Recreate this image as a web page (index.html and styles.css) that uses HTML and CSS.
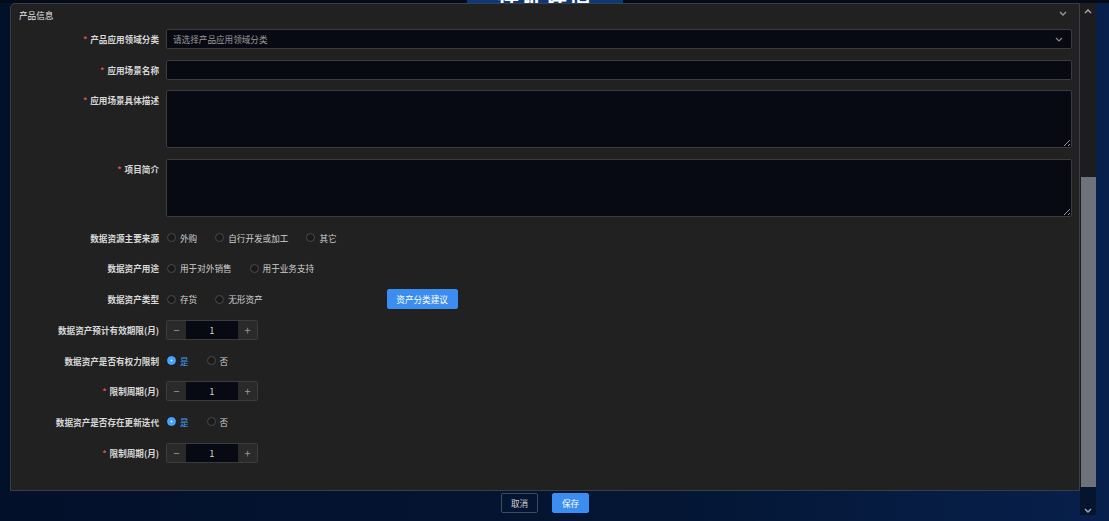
FILE: index.html
```html
<!DOCTYPE html>
<html lang="zh-CN">
<head>
  <meta charset="UTF-8">
  <title>产品信息</title>
  <link rel="stylesheet" href="styles.css">
</head>
<body>
<div class="page">
  <div class="title-bar">
    <div class="title"><span>存证详情</span></div>
  </div>

  <div class="body-row">
    <div class="content">
      <div class="panel">
        <div class="panel-head">
          <span>产品信息</span>
          <svg class="chev" width="8" height="5" viewBox="0 0 8 5"><path d="M1 1 L4 4 L7 1" fill="none" stroke="#9a9a9a" stroke-width="1.3"/></svg>
        </div>

        <div class="form">
          <div class="item">
            <label class="lbl"><i>*</i>产品应用领域分类</label>
            <div class="ctl select">
              <span class="ph">请选择产品应用领域分类</span>
              <svg width="8" height="5" viewBox="0 0 8 5"><path d="M1 1 L4 4 L7 1" fill="none" stroke="#8a8a8a" stroke-width="1.2"/></svg>
            </div>
          </div>

          <div class="item">
            <label class="lbl"><i>*</i>应用场景名称</label>
            <input class="ctl input" type="text">
          </div>

          <div class="item top">
            <label class="lbl"><i>*</i>应用场景具体描述</label>
            <textarea class="ctl area"></textarea>
          </div>

          <div class="item top">
            <label class="lbl"><i>*</i>项目简介</label>
            <textarea class="ctl area"></textarea>
          </div>

          <div class="item">
            <label class="lbl">数据资源主要来源</label>
            <div class="radios">
              <span class="radio"><b></b>外购</span>
              <span class="radio"><b></b>自行开发或加工</span>
              <span class="radio"><b></b>其它</span>
            </div>
          </div>

          <div class="item">
            <label class="lbl">数据资产用途</label>
            <div class="radios">
              <span class="radio"><b></b>用于对外销售</span>
              <span class="radio"><b></b>用于业务支持</span>
            </div>
          </div>

          <div class="item">
            <label class="lbl">数据资产类型</label>
            <div class="radios">
              <span class="radio"><b></b>存货</span>
              <span class="radio"><b></b>无形资产</span>
            </div>
            <button class="btn primary suggest">资产分类建议</button>
          </div>

          <div class="item">
            <label class="lbl">数据资产预计有效期限(月)</label>
            <div class="num">
              <span class="step">−</span>
              <span class="val">1</span>
              <span class="step">+</span>
            </div>
          </div>

          <div class="item">
            <label class="lbl">数据资产是否有权力限制</label>
            <div class="radios">
              <span class="radio on"><b></b>是</span>
              <span class="radio"><b></b>否</span>
            </div>
          </div>

          <div class="item">
            <label class="lbl"><i>*</i>限制周期(月)</label>
            <div class="num">
              <span class="step">−</span>
              <span class="val">1</span>
              <span class="step">+</span>
            </div>
          </div>

          <div class="item">
            <label class="lbl">数据资产是否存在更新迭代</label>
            <div class="radios">
              <span class="radio on"><b></b>是</span>
              <span class="radio"><b></b>否</span>
            </div>
          </div>

          <div class="item">
            <label class="lbl"><i>*</i>限制周期(月)</label>
            <div class="num">
              <span class="step">−</span>
              <span class="val">1</span>
              <span class="step">+</span>
            </div>
          </div>
        </div>
      </div>

      <div class="footer">
        <button class="btn ghost">取消</button>
        <button class="btn primary">保存</button>
      </div>
    </div>

    <div class="scrollbar">
      <div class="track">
        <svg class="arrow" width="8" height="5" viewBox="0 0 8 5"><path d="M1 4 L4 1 L7 4" fill="none" stroke="#a8adb5" stroke-width="1.4"/></svg>
        <div class="thumb"></div>
      </div>
      <div class="tail">
        <svg class="arrow" width="8" height="5" viewBox="0 0 8 5"><path d="M1 1 L4 4 L7 1" fill="none" stroke="#a8adb5" stroke-width="1.4"/></svg>
      </div>
    </div>
  </div>
</div>
</body>
</html>
```

FILE: styles.css
```css
* { box-sizing: border-box; }

html, body {
  margin: 0;
  height: 100%;
  overflow: hidden;
}

body {
  font-family: "Noto Sans CJK SC", "Noto Sans", sans-serif;
  background: linear-gradient(90deg, #03102a 0%, #041634 60%, #07204c 100%);
  color: #d4d4d4;
}

.page {
  height: 100%;
  display: flex;
  flex-direction: column;
}

.title-bar {
  height: 3px;
  background: #040a16;
  display: flex;
  justify-content: center;
  overflow: hidden;
  flex-shrink: 0;
}

.title {
  width: 156px;
  height: 3px;
  margin-left: -19px;
  background: #0c3a78;
  display: flex;
  justify-content: center;
  align-items: flex-end;
  overflow: hidden;
}

.title span {
  color: #fff;
  font-size: 22px;
  font-weight: bold;
  line-height: 22px;
  margin-bottom: -2px;
  letter-spacing: 2px;
}

.body-row {
  display: flex;
  padding-left: 10px;
  height: 512px;
}

.content {
  width: 1070px;
  display: flex;
  flex-direction: column;
}

.panel {
  height: 488px;
  background: #212121;
  border: 1px solid #3a3f47;
  border-radius: 5px 0 0 0;
  display: flex;
  flex-direction: column;
}

.panel-head {
  height: 21px;
  padding: 0 12px 0 8px;
  display: flex;
  align-items: center;
  justify-content: space-between;
  font-size: 8.6px;
  color: #e6e6e6;
}

.panel-head .chev { margin-top: -2px; }

.form {
  padding: 4px 7px 0 0;
  display: flex;
  flex-direction: column;
  gap: 10.7px;
}

.item {
  display: flex;
  align-items: center;
  min-height: 20px;
}

.item.top { align-items: flex-start; }

.lbl {
  width: 155px;
  flex-shrink: 0;
  padding-right: 7px;
  text-align: right;
  font-size: 8.6px;
  font-weight: bold;
  line-height: 20px;
  color: #d8d8d8;
  white-space: nowrap;
}

.lbl i {
  font-style: normal;
  color: #d9534f;
  margin-right: 3px;
}

.ctl {
  flex: 1;
  height: 20px;
  background: #070a12;
  border: 1px solid #3c3c3c;
  border-radius: 2px;
  color: #ccc;
  font-family: inherit;
  font-size: 8.6px;
  outline: none;
}

.select {
  display: flex;
  align-items: center;
  justify-content: space-between;
  padding: 0 8px 0 6px;
}

.select .ph { color: #9a9a9a; }

.input { padding: 0 6px; }

.area {
  height: 58px;
  resize: vertical;
  padding: 4px 6px;
}

.radios {
  display: flex;
  gap: 17px;
}

.radio {
  display: flex;
  align-items: center;
  gap: 4px;
  font-size: 8.6px;
  color: #cfcfcf;
  line-height: 20px;
}

.radio b {
  width: 9px;
  height: 9px;
  border-radius: 50%;
  border: 1px solid #4a4a4a;
  background: #1a1a1a;
  margin-left: 1px;
}

.radio.on { color: #409eff; }

.radio.on b {
  background: #409eff;
  border-color: #409eff;
  box-shadow: inset 0 0 0 2.5px #409eff, inset 0 0 0 5px #fff;
}

.num {
  display: flex;
  width: 92px;
  height: 20px;
  border: 1px solid #3c3c3c;
  border-radius: 2px;
  overflow: hidden;
}

.num .step {
  width: 19px;
  display: flex;
  align-items: center;
  justify-content: center;
  background: #2a2a2a;
  color: #9a9a9a;
  font-size: 11px;
}

.num .val {
  flex: 1;
  background: #070a12;
  display: flex;
  align-items: center;
  justify-content: center;
  font-size: 8.6px;
  color: #ddd;
}

.btn {
  height: 20px;
  border-radius: 2px;
  font-family: inherit;
  font-size: 8.6px;
  padding: 0 9px;
  cursor: pointer;
}

.btn.primary {
  background: #3b8ef0;
  border: 1px solid #3b8ef0;
  color: #fff;
}

.btn.ghost {
  background: transparent;
  border: 1px solid #414a5a;
  color: #d0d0d0;
}

.suggest {
  width: 71px;
  padding: 0;
  margin-left: 124px;
}

.footer {
  height: 24px;
  display: flex;
  justify-content: center;
  align-items: flex-start;
  padding-top: 2px;
  gap: 14px;
}

.footer .btn { width: 37px; padding: 0; }

.scrollbar {
  width: 16px;
  display: flex;
  flex-direction: column;
}

.track {
  height: 484px;
  display: flex;
  flex-direction: column;
  align-items: center;
  justify-content: space-between;
  background: #1d1d1f;
}

.scrollbar .arrow { margin-top: 6px; flex-shrink: 0; }

.thumb {
  height: 310px;
  width: 15px;
  margin-left: 1px;
  background: #6e737b;
}

.tail {
  flex: 1;
  display: flex;
  justify-content: center;
  align-items: flex-start;
  padding-top: 15px;
  background: #06152e;
}
```
